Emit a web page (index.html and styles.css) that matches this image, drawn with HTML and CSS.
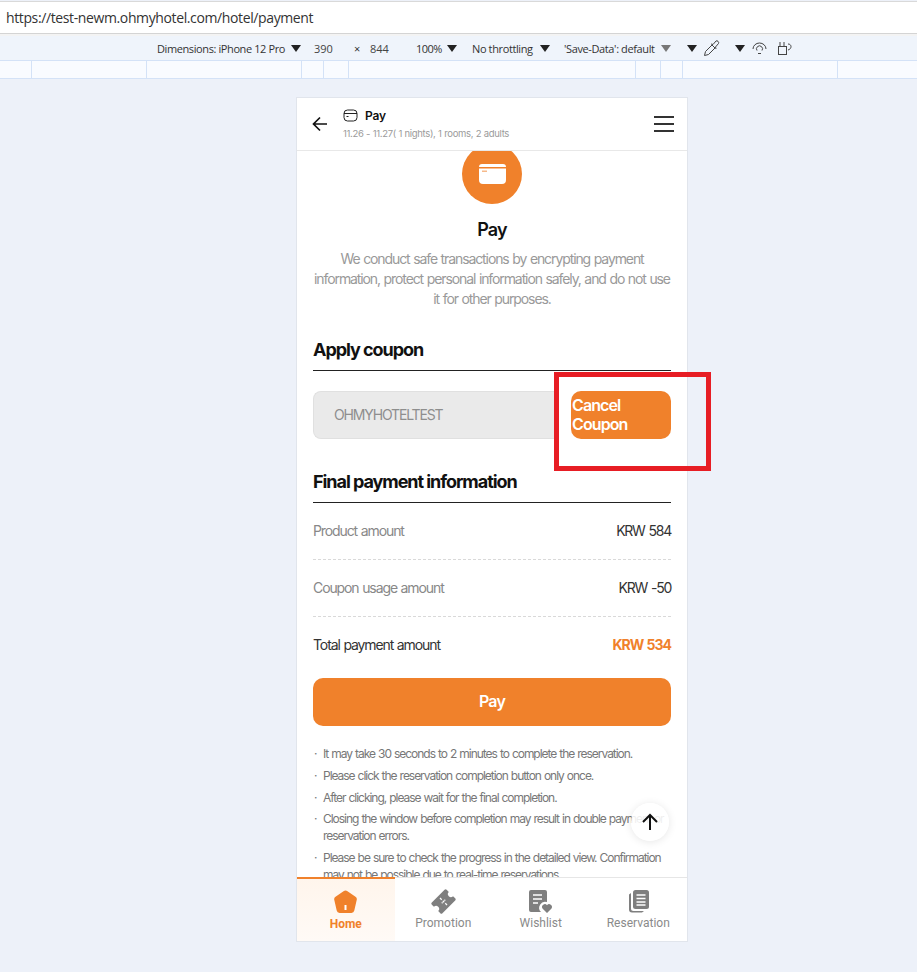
FILE: index.html
```html
<!DOCTYPE html>
<html lang="en">
<head>
<meta charset="utf-8">
<title>Pay</title>
<link rel="stylesheet" href="styles.css">
</head>
<body>
<div class="urlbar"><span class="url">https://test-newm.ohmyhotel.com/hotel/payment</span></div>
<div class="toolbar">
  <span class="tb dims">Dimensions: iPhone 12 Pro</span><i class="tri tri1"></i>
  <span class="tb w">390</span><span class="tb x">×</span><span class="tb h">844</span>
  <span class="tb zoomv">100%</span><i class="tri tri2"></i>
  <span class="tb thr">No throttling</span><i class="tri tri2"></i>
  <span class="tb save">'Save-Data': default</span><i class="tri tri5 grey"></i>
  <i class="tri tri3"></i>
  <svg class="tool dropper" width="18" height="18" viewBox="0 0 18 18" fill="none" stroke="#444" stroke-width="1"><path d="M1.500 16.500l1-4 6.500-6.500 3 3-6.500 6.500zM8 5l2 .5 3-3.500c1-1 3.500 1 2.500 2.500L12.500 8l.5 2"/></svg>
  <i class="tri tri4"></i>
  <svg class="tool eye" width="15" height="14" viewBox="0 0 15 14" fill="none" stroke="#444" stroke-width="1"><path d="M1 8a6.500 6 0 0 1 13 0"/><path d="M5 9.500a3 3 0 1 1 5 0"/><path d="M6 12.500h3"/></svg>
  <svg class="tool rot" width="16" height="16" viewBox="0 0 16 16" fill="none" stroke="#444" stroke-width="1"><rect x="1.500" y="6.500" width="8" height="8"/><path d="M3 2v4M7 2v4M11 4c4 0 4 5 0 6"/></svg>
</div>
<div class="ruler">
  <i class="rc c1"></i><i class="rc c2"></i><i class="rc c3"></i><i class="rc c4"></i><i class="rc c5"></i><i class="rc c6"></i><i class="rc c7"></i><i class="rc c8"></i><i class="rc c9"></i>
</div>
<main class="stage">
  <div class="phone">
    <header class="head">
      <svg class="back" width="16" height="16" viewBox="0 0 16 16" fill="none" stroke="#111" stroke-width="1.700"><path d="M15 8H1.500M8 1.500L1.500 8 8 14.500"/></svg>
      <div class="head-text">
        <div class="head-title">
          <svg width="15" height="13" viewBox="0 0 15 13" fill="none" stroke="#222" stroke-width="1"><rect x="1" y="1" width="13" height="11" rx="3.500"/><path d="M1 4.500h13M3.500 7.500h2"/></svg>
          <span>Pay</span>
        </div>
        <div class="head-sub">11.26 - 11.27( 1 nights), 1 rooms, 2 adults</div>
      </div>
      <div class="burger"><i></i><i></i><i></i></div>
    </header>
    <div class="scroll">
      <div class="badge-wrap">
        <div class="badge">
          <svg width="27" height="20" viewBox="0 0 27 20"><path d="M3 0h21a3 3 0 0 1 3 3v0H0v0a3 3 0 0 1 3-3zM0 4.500h27V16a4 4 0 0 1-4 4H4a4 4 0 0 1-4-4z" fill="#fff"/><rect x="3" y="6.500" width="5" height="1.500" fill="#f6b98a"/></svg>
        </div>
      </div>
      <h1 class="pay-title">Pay</h1>
      <p class="pay-desc">We conduct safe transactions by encrypting payment information, protect personal information safely, and do not use it for other purposes.</p>
      <h2 class="sec sec-coupon">Apply coupon</h2>
      <div class="coupon">
        <div class="coupon-input">OHMYHOTELTEST</div>
        <button class="coupon-btn">Cancel Coupon</button>
      </div>
      <h2 class="sec sec-final">Final payment information</h2>
      <div class="row dashed"><span class="lbl">Product amount</span><span class="val">KRW 584</span></div>
      <div class="row dashed"><span class="lbl">Coupon usage amount</span><span class="val">KRW -50</span></div>
      <div class="row"><span class="lbl dark">Total payment amount</span><span class="val total">KRW 534</span></div>
      <button class="pay-btn">Pay</button>
      <ul class="notes">
        <li>It may take 30 seconds to 2 minutes to complete the reservation.</li>
        <li>Please click the reservation completion button only once.</li>
        <li>After clicking, please wait for the final completion.</li>
        <li>Closing the window before completion may result in double payment or reservation errors.</li>
        <li>Please be sure to check the progress in the detailed view. Confirmation may not be possible due to real-time reservations.</li>
      </ul>
    </div>
    <button class="top-btn" aria-label="Top">
      <svg width="18" height="18" viewBox="0 0 18 18" fill="none" stroke="#111" stroke-width="2"><path d="M9 17V2M2 9l7-7 7 7"/></svg>
    </button>
    <nav class="tabs">
      <div class="tab active">
        <svg width="25" height="25" viewBox="0 0 25 25"><path d="M10.500 1.300a3.500 3.500 0 0 1 4 0l8 5.500a3 3 0 0 1 1.200 3.300l-2.400 10.500a3 3 0 0 1-3 2.400H6.700a3 3 0 0 1-3-2.400L1.300 10.100a3 3 0 0 1 1.200-3.300z" fill="#f0812b"/><rect x="11.500" y="15" width="2" height="5" fill="#fff"/></svg>
        <span>Home</span>
      </div>
      <div class="tab">
        <svg width="25" height="25" viewBox="0 0 25 25"><g transform="rotate(-45 12.500 12.500)"><path d="M2 6.500a1.500 1.500 0 0 1 1.500-1.500h18a1.500 1.500 0 0 1 1.500 1.500v3a3 3 0 0 0 0 6v3a1.500 1.500 0 0 1-1.500 1.500h-18a1.500 1.500 0 0 1-1.500-1.500v-3a3 3 0 0 0 0-6z" fill="#7f7f7f"/><path d="M12.500 7.500v2.500M12.500 11.500v2M12.500 15v2.500M10 12.500h1.200M13.800 12.500h1.200" stroke="#fff" stroke-width="1.200"/></g></svg>
        <span>Promotion</span>
      </div>
      <div class="tab">
        <svg width="25" height="25" viewBox="0 0 25 25"><path d="M3 1h14a2 2 0 0 1 2 2v10a6 6 0 0 0-6 10H3a2 2 0 0 1-2-2V3a2 2 0 0 1 2-2z" fill="#7f7f7f"/><path d="M5 6h9M5 10h9M5 14h5" stroke="#fff" stroke-width="1.500"/><path d="M19 24l-4.500-4.500a2.800 2.800 0 0 1 4.500-3.300 2.800 2.800 0 0 1 4.500 3.300z" fill="#7f7f7f"/></svg>
        <span>Wishlist</span>
      </div>
      <div class="tab">
        <svg width="25" height="25" viewBox="0 0 25 25"><path d="M5 4L3 5.500v15a3 3 0 0 0 3 3h10l2-1.500H7.500A2.500 2.500 0 0 1 5 19.500z" fill="#7f7f7f"/><rect x="7" y="1" width="16" height="19" rx="2.500" fill="#7f7f7f"/><path d="M10.500 6h9M10.500 9.500h9M10.500 13h9M10.500 16h9" stroke="#fff" stroke-width="1.500"/></svg>
        <span>Reservation</span>
      </div>
    </nav>
  </div>
</main>
<div class="redbox"></div>
</body>
</html>
```
FILE: styles.css
```css
* { box-sizing: border-box; }
html, body { margin: 0; padding: 0; }
body {
  width: 917px;
  height: 972px;
  overflow: hidden;
  background: #edf1f9;
  font-family: Inter, "Liberation Sans", sans-serif;
  position: relative;
}
.urlbar {
  height: 33px;
  margin-top: 1px;
  background: #fff;
  border-top: 1px solid #d9d9d9;
  border-bottom: 1px solid #d4d4d4;
  padding-left: 6px;
  display: flex;
  align-items: center;
}
.url { font: 14px "Open Sans", "Liberation Sans", sans-serif; color: #333; letter-spacing: -0.38px; }
.toolbar {
  height: 26px;
  background: #eff4fb;
  display: flex;
  align-items: center;
  padding-left: 157px;
  border-top: 2px solid #f3f3f3;
}
.tb { font: 11px "Open Sans", "Liberation Sans", sans-serif; color: #333; white-space: nowrap; flex: none; }
.dims { width: 128px; letter-spacing: -0.4px; }
.tri { display: block; flex: none; width: 0; height: 0; border-left: 5px solid transparent; border-right: 5px solid transparent; border-top: 7px solid #222; }
.tri1 { margin-left: 6px; }
.tri2 { margin-left: 6px; }
.tri3 { margin-left: 16px; }
.tri4 { margin-left: 14px; }
.tri5 { margin-left: 4px; }
.grey { border-top-color: #777; }
.w { margin-left: 13px; width: 20px; color: #444; }
.x { margin-left: 20px; width: 8px; }
.h { margin-left: 8px; width: 18px; color: #444; }
.zoomv { margin-left: 28px; width: 25px; letter-spacing: -0.5px; }
.thr { margin-left: 15px; width: 62px; letter-spacing: -0.38px; }
.save { margin-left: 14px; width: 93px; letter-spacing: -0.38px; }
.tool { display: block; flex: none; }
.dropper { margin-left: 6px; }
.eye { margin-left: 7px; }
.rot { margin-left: 10px; }
.ruler {
  height: 19px;
  background: #f9fbff;
  border-top: 1px solid #d4e2f7;
  border-bottom: 1px solid #d4e2f7;
  position: relative;
}
.rc { position: absolute; top: 0; bottom: 0; width: 1px; background: #d4e2f7; }
.c1 { left: 31px; } .c2 { left: 146px; } .c3 { left: 301px; } .c4 { left: 323px; } .c5 { left: 348px; }
.c6 { left: 635px; } .c7 { left: 660px; } .c8 { left: 682px; } .c9 { left: 837px; }
.stage { padding: 18px 0 0 296px; }
.phone {
  width: 392px;
  height: 845px;
  background: #fff;
  border: 1px solid #e1e5ec;
  display: flex;
  flex-direction: column;
  position: relative;
  overflow: hidden;
}
.head {
  height: 53px;
  flex: none;
  border-bottom: 1px solid #e8e8e8;
  display: flex;
  align-items: center;
  padding: 0 13px 0 15px;
  background: #fff;
  position: relative;
  z-index: 2;
}
.back { flex: none; }
.head-text { margin-left: 15px; flex: 1; margin-top: -1px; }
.head-title { display: flex; align-items: center; gap: 7px; font-size: 12px; font-weight: 600; color: #111; line-height: 15px; letter-spacing: -0.2px; }
.head-sub { font-size: 9.500px; color: #9a9a9a; margin-top: 5px; line-height: 12px; letter-spacing: -0.34px; word-spacing: 0.3px; }
.burger { width: 20px; display: flex; flex-direction: column; gap: 5px; }
.burger i { display: block; height: 2px; background: #333; }
.scroll { flex: 1; min-height: 0; overflow: hidden; padding: 0 16px; }
.badge-wrap { display: flex; justify-content: center; margin-top: -7px; }
.badge { width: 60px; height: 60px; border-radius: 50%; background: #f0812b; display: flex; align-items: center; justify-content: center; }
.pay-title { margin: 15px 0 0; text-align: center; font-size: 18px; font-weight: 600; color: #111; line-height: 22px; letter-spacing: -0.9px; }
.pay-desc { margin: 8px 0 0; text-align: center; font-size: 14px; line-height: 20px; color: #999; letter-spacing: -1.1px; word-spacing: 0.8px; }
.sec { margin: 0; font-size: 18px; font-weight: 700; color: #111; line-height: 22px; letter-spacing: -1.05px; border-bottom: 1px solid #222; }
.sec-coupon { margin-top: 30px; padding-bottom: 9px; }
.coupon { display: flex; margin-top: 20px; height: 48px; }
.coupon-input { flex: 1; background: #eaeaea; border: 1px solid #e0e0e0; border-right: 0; border-radius: 8px 0 0 8px; padding: 0 0 2px 20px; display: flex; align-items: center; font-size: 14px; color: #8e8e8e; letter-spacing: -1.15px; }
.coupon-btn { width: 100px; margin-left: 14px; border: 0; background: #f0812b; color: #fff; border-radius: 10px; font: 600 16px/19px Inter, "Liberation Sans", sans-serif; text-align: left; padding: 0 1px; letter-spacing: -0.9px; }
.sec-final { margin-top: 32px; padding-bottom: 9px; }
.row { height: 57px; padding-bottom: 2px; display: flex; justify-content: space-between; align-items: center; font-size: 14px; letter-spacing: -1.1px; word-spacing: 0.8px; }
.dashed { border-bottom: 1px dashed #d9d9d9; }
.lbl { color: #888; }
.lbl.dark { color: #333; }
.val { color: #333; letter-spacing: -1.25px; word-spacing: 1.2px; }
.total { color: #f0812b; font-weight: 700; letter-spacing: -1px; word-spacing: 1px; }
.pay-btn { display: block; width: 100%; height: 48px; margin-top: 4px; padding: 0 0 2px; border: 0; border-radius: 10px; background: #f0812b; color: #fff; font: 600 16px Inter, "Liberation Sans", sans-serif; letter-spacing: -0.9px; }
.notes { list-style: none; margin: 19px 0 0; padding: 0; font-size: 12px; line-height: 17px; color: #777; letter-spacing: -1.03px; word-spacing: 0.7px; }
.notes li { padding-left: 10px; margin-bottom: 4.800px; position: relative; }
.notes li::before { content: "·"; position: absolute; left: 1px; }
.top-btn { position: absolute; left: 334px; top: 705px; width: 38px; height: 38px; border: 0; border-radius: 50%; background: rgba(255,255,255,.88); box-shadow: 0 1px 8px rgba(0,0,0,.1); display: flex; align-items: center; justify-content: center; padding: 0; z-index: 3; }
.tabs { height: 64px; flex: none; display: grid; grid-template-columns: repeat(4, 1fr); background: #fff; border-top: 1px solid #e6e6e6; position: relative; z-index: 2; }
.tab { display: flex; flex-direction: column; align-items: center; padding-top: 11px; font: 12px Roboto, "Liberation Sans", sans-serif; color: #8a8a8a; gap: 2px; }
.tab span { line-height: 15px; }
.tab.active { background: linear-gradient(#fff5ec, #fffaf6); color: #f0812b; font-weight: 700; border-top: 2px solid #f0812b; margin-top: -1px; padding-top: 11px; }
.redbox { position: absolute; left: 554px; top: 372px; width: 157px; height: 99px; border: 5px solid #e71d24; }
```
